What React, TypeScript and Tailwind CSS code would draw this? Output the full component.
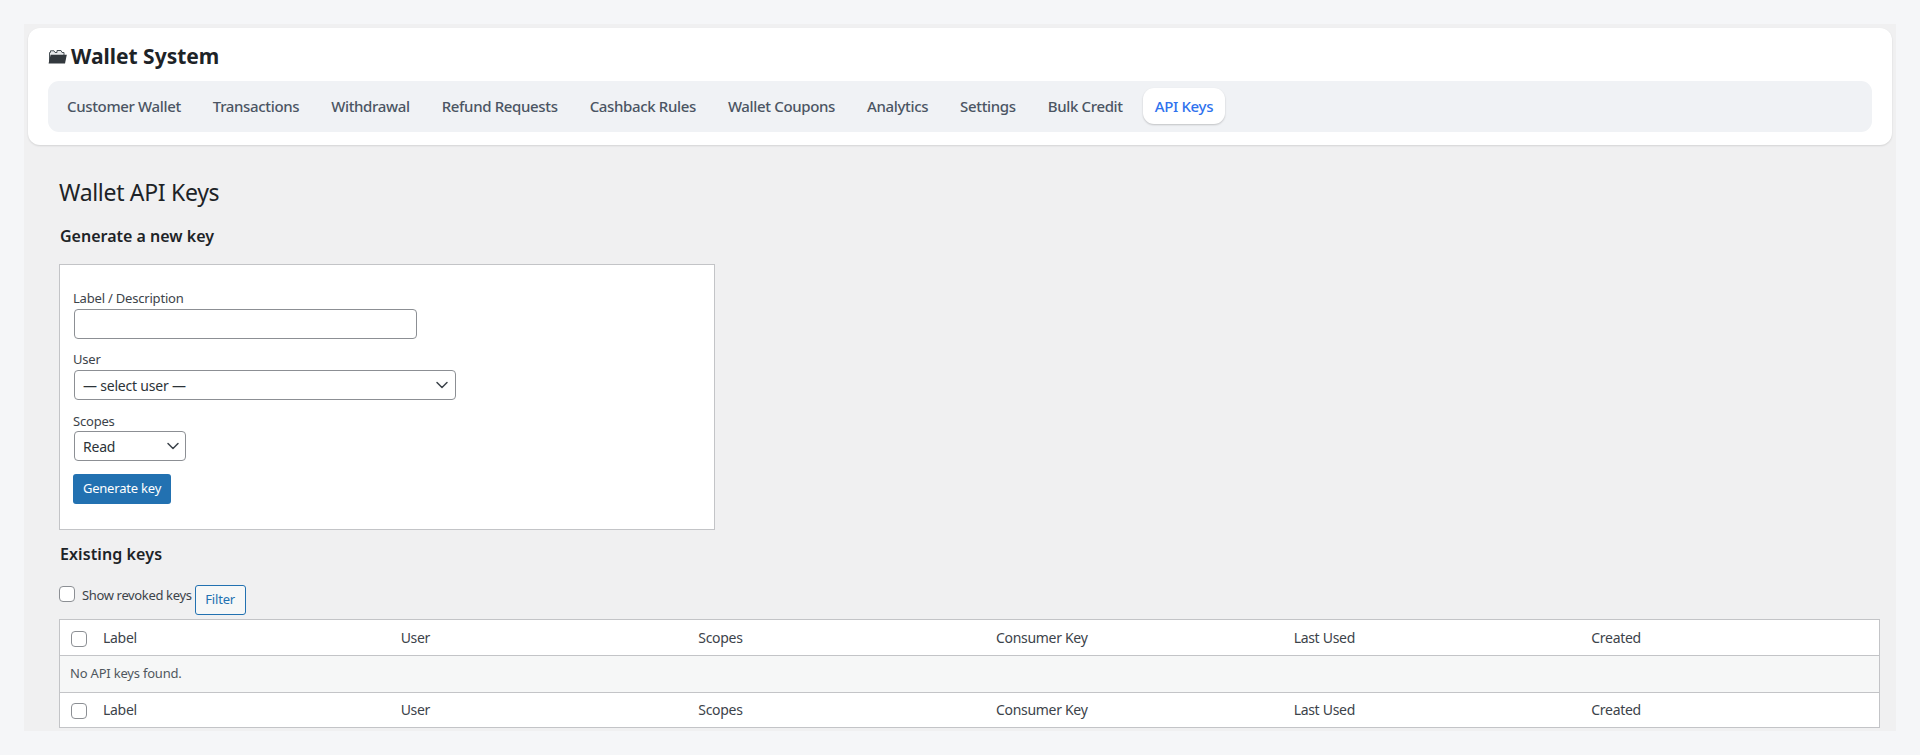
import { ChevronDown } from 'lucide-react';

const TABS = [
  'Customer Wallet',
  'Transactions',
  'Withdrawal',
  'Refund Requests',
  'Cashback Rules',
  'Wallet Coupons',
  'Analytics',
  'Settings',
  'Bulk Credit',
];

const COLUMNS = ['Label', 'User', 'Scopes', 'Consumer Key', 'Last Used', 'Created'];

function FolderIcon() {
  return (
    <svg viewBox="0 0 19 15" className="w-[19px] h-[15px] shrink-0 mr-[4px]">
      <path d="M1.5 13V3.5h1V1.8h3.5l1 1.7h2V1.5h4l1 2h2v3" fill="#e8eaec" stroke="#4b5358" strokeWidth="1" />
      <path d="M2.6 5.8h16.2l-1.8 8.7H0.6z" fill="#33393e" />
    </svg>
  );
}

function HeaderRow({ borderTop }: { borderTop?: boolean }) {
  return (
    <tr className="bg-white">
      <td className={`pl-[11px] pr-0 ${borderTop ? 'h-[35px] border-t border-[#c3c4c7]' : 'h-[36px] border-b border-[#c3c4c7]'}`}>
        <input type="checkbox" className="mt-[2px] block w-4 h-4 appearance-none rounded-[4px] border border-[#8c8f94] bg-white" />
      </td>
      {COLUMNS.map((col) => (
        <td
          key={col}
          className={`pl-[10px] pb-[1px] text-[14px] tracking-[-0.3px] text-[#3c434a] ${borderTop ? 'border-t border-[#c3c4c7]' : 'border-b border-[#c3c4c7]'}`}
        >
          {col}
        </td>
      ))}
    </tr>
  );
}

export default function App() {
  return (
    <div className="h-[755px] overflow-hidden bg-[#f5f6f8] pt-6 px-6 font-['Noto_Sans',sans-serif] tracking-[-0.2px]">
      <div className="h-[707px] bg-[#f0f0f1] pt-1 px-1">
        {/* Header card */}
        <div className="h-[117px] rounded-[12px] bg-white px-5 shadow-[0_1px_2px_rgba(0,0,0,0.12)]">
          <div className="flex h-[53px] items-center pt-[4px]">
            <FolderIcon />
            <h1 className="text-[21px] leading-none font-bold tracking-normal text-[#1d2327]">Wallet System</h1>
          </div>
          <nav className="flex h-[51px] items-center gap-2 rounded-[11px] bg-[#f0f2f5] px-[7px] pb-[2px]">
            {TABS.map((tab) => (
              <a key={tab} className="px-3 py-2 text-[15px] leading-5 font-medium tracking-[-0.35px] text-[#4b5563] whitespace-nowrap">
                {tab}
              </a>
            ))}
            <a className="h-9 rounded-[11px] bg-white px-3 text-[15px] leading-9 font-medium tracking-[-0.35px] text-[#2f72ee] shadow-[0_1px_2px_rgba(0,0,0,0.2)] whitespace-nowrap">
              API Keys
            </a>
          </nav>
        </div>

        {/* Page content */}
        <div className="pl-[31px] pr-3">
          <h2 className="mt-[32px] text-[23px] leading-[30px] font-normal tracking-[-0.3px] text-[#1d2327]">Wallet API Keys</h2>
          <h3 className="mt-[19px] pl-[1px] text-[16px] leading-[20px] font-semibold tracking-normal text-[#1d2327]">Generate a new key</h3>

          <div className="mt-[18px] h-[266px] w-[656px] border border-[#c3c4c7] bg-white pl-[13px]">
            <label className="block mt-[24px] text-[13px] leading-[18px] text-[#3c434a]">Label / Description</label>
            <input
              type="text"
              className="mt-[2px] ml-[1px] block h-[30px] w-[343px] rounded-[4px] border border-[#8c8f94] bg-white"
            />
            <label className="block mt-[11px] text-[13px] leading-[18px] text-[#3c434a]">User</label>
            <div className="relative mt-[2px] ml-[1px] w-[382px]">
              <select className="block h-[30px] w-full appearance-none rounded-[4px] border border-[#8c8f94] bg-white pl-2 text-[14px] text-[#2c3338]">
                <option>— select user —</option>
              </select>
              <ChevronDown className="pointer-events-none absolute right-[4px] top-[5px] h-[20px] w-[20px] text-[#3c434a]" strokeWidth={1.8} />
            </div>
            <label className="block mt-[12px] text-[13px] leading-[18px] text-[#3c434a]">Scopes</label>
            <div className="relative mt-[1px] ml-[1px] w-[112px]">
              <select className="block h-[30px] w-full appearance-none rounded-[4px] border border-[#8c8f94] bg-white pl-2 text-[14px] text-[#2c3338]">
                <option>Read</option>
              </select>
              <ChevronDown className="pointer-events-none absolute right-[3px] top-[5px] h-[20px] w-[20px] text-[#3c434a]" strokeWidth={1.8} />
            </div>
            <button className="mt-[13px] block h-[30px] w-[98px] rounded-[3px] bg-[#2271b1] text-[13px] text-white">
              Generate key
            </button>
          </div>

          <h3 className="mt-[14px] pl-[1px] text-[16px] leading-[20px] font-semibold tracking-[0.1px] text-[#1d2327]">Existing keys</h3>

          <div className="mt-[22px] flex items-start">
            <input type="checkbox" className="h-4 w-4 appearance-none rounded-[4px] border border-[#8c8f94] bg-white" />
            <span className="ml-[7px] text-[13px] leading-[18px] tracking-[-0.35px] text-[#3c434a]">Show revoked keys</span>
            <button className="ml-[3px] h-[30px] w-[51px] -translate-y-px rounded-[3px] border border-[#2271b1] bg-[#f6f7f7] text-[13px] text-[#2271b1]">
              Filter
            </button>
          </div>

          <table className="mt-[3px] w-[1821px] table-fixed border-separate border-spacing-0 border border-[#c3c4c7]">
            <colgroup>
              <col className="w-[33px]" />
            </colgroup>
            <tbody>
              <HeaderRow />
              <tr className="bg-[#f6f7f7]">
                <td colSpan={7} className="h-[36px] pl-[10px] pb-[1px] text-[13px] text-[#50575e]">
                  No API keys found.
                </td>
              </tr>
              <HeaderRow borderTop />
            </tbody>
          </table>
        </div>
      </div>
    </div>
  );
}
